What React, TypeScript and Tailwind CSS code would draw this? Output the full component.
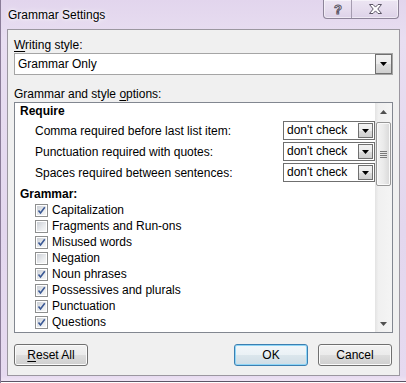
import React from "react";

const rules = [
  "Comma required before last list item:",
  "Punctuation required with quotes:",
  "Spaces required between sentences:",
];

const grammar: [string, boolean][] = [
  ["Capitalization", true],
  ["Fragments and Run-ons", false],
  ["Misused words", true],
  ["Negation", false],
  ["Noun phrases", true],
  ["Possessives and plurals", true],
  ["Punctuation", true],
  ["Questions", true],
  ["Relative clauses", true],
];

function Arrow() {
  return (
    <svg width="7" height="4" viewBox="0 0 7 4">
      <path d="M0 0h7L3.5 4z" fill="#000" />
    </svg>
  );
}

function DropButton({ className = "" }: { className?: string }) {
  return (
    <div
      className={
        "flex items-center justify-center border border-[#707070] bg-[linear-gradient(180deg,#f2f2f2_0%,#ebebeb_50%,#dddddd_51%,#cfcfcf_100%)] " +
        className
      }
    >
      <Arrow />
    </div>
  );
}

function Check({ checked }: { checked: boolean }) {
  return (
    <div className="w-[13px] h-[13px] shrink-0 border border-[#8e8f8f] bg-white p-[1px]">
      <div className="relative w-full h-full bg-[linear-gradient(135deg,#cbcfd5_0%,#e9ebee_60%,#f6f6f6_100%)]">
        {checked && (
          <svg width="9" height="9" viewBox="0 0 9 9" className="absolute left-0 top-0">
            <path d="M1.5 4.5L3.5 7L7.8 1.2" fill="none" stroke="#3a5894" strokeWidth="1.6" />
          </svg>
        )}
      </div>
    </div>
  );
}

function Button({ children, def = false }: { children: React.ReactNode; def?: boolean }) {
  return (
    <button
      className={
        "w-[74px] h-[22px] rounded-[3px] border text-[12px] leading-[14px] text-black " +
        (def
          ? "border-[#3c7fb1] shadow-[inset_0_0_0_1px_#8fd6f7] bg-[linear-gradient(180deg,#f2f7fa_0%,#eaf1f5_50%,#dbe6ec_51%,#cfdde6_100%)]"
          : "border-[#707070] shadow-[inset_0_0_0_1px_#fbfbfb] bg-[linear-gradient(180deg,#f2f2f2_0%,#ebebeb_50%,#dddddd_51%,#cfcfcf_100%)]")
      }
    >
      {children}
    </button>
  );
}

export default function App() {
  return (
    <div className="w-[406px] h-[383px] overflow-hidden flex flex-col bg-[linear-gradient(180deg,#e2d5ed_0%,#e8def1_10%,#e3d7ee_60%,#e6daf0_100%)] border-l border-[#8a7c98] font-['Liberation_Sans',Arial,sans-serif] text-[12px] text-black">
      <div className="h-[29px] shrink-0 flex items-start">
        <div className="pl-[7px] pt-[7px] leading-[16px] text-[12px] [text-shadow:0_0_6px_#fff,0_0_3px_#fff]">
          Grammar Settings
        </div>
        <div className="ml-auto mr-[7px] flex h-[19px] rounded-b-[4px] border border-t-0 border-[#8d8499] bg-[linear-gradient(180deg,#ece5f3_0%,#e6ddee_50%,#ddd2e8_100%)] shadow-[inset_0_0_0_1px_rgba(255,255,255,0.5)]">
          <div className="w-[28px] flex items-center justify-center border-r border-[#a59cb0]">
            <svg width="10" height="13" viewBox="0 0 10 13">
              <text
                x="5"
                y="11"
                textAnchor="middle"
                fontSize="13"
                fontWeight="bold"
                fontFamily="Liberation Sans, Arial, sans-serif"
                fill="#fff"
                stroke="#5b5566"
                strokeWidth="1"
              >
                ?
              </text>
            </svg>
          </div>
          <div className="w-[46px] flex items-center justify-center">
            <svg width="13" height="10" viewBox="0 0 13 10">
              <path
                d="M0.5 0.5h3.5l2.5 2.6 2.5-2.6h3.5L8.8 5l3.7 4.5H9L6.5 6.9 4 9.5H0.5L4.2 5z"
                fill="#fff"
                stroke="#5b5566"
                strokeWidth="1"
                strokeLinejoin="round"
              />
            </svg>
          </div>
        </div>
      </div>

      <div className="mx-[6px] h-[347px] shrink-0 border border-[#9b97a0] bg-[#f0f0f0] px-[6px] pt-[7px] pb-[9px] flex flex-col">
        <div className="leading-[16px] h-[16px]">
          <span className="underline underline-offset-2">W</span>riting style:
        </div>
        <div className="h-[22px] border border-[#a5a5a5] bg-white flex">
          <div className="flex-1 pl-[3px] leading-[20px]">Grammar Only</div>
          <DropButton className="w-[17px] h-[20px]" />
        </div>

        <div className="mt-[11px] leading-[16px] h-[16px]">
          Grammar and style <span className="underline underline-offset-2">o</span>ptions:
        </div>
        <div className="h-[231px] border border-[#828790] bg-white flex">
          <div className="flex-1 overflow-hidden">
            <div className="pl-[5px] h-[16px] leading-[16px] font-bold">Require</div>
            <div className="mt-[1px]">
              {rules.map((r) => (
                <div key={r} className="h-[21px] flex items-center pl-[20px]">
                  <div className="flex-1">{r}</div>
                  <div className="w-[92px] h-[19px] border border-[#6f6f6f] bg-white flex">
                    <div className="flex-1 pl-[3px] leading-[17px]">don't check</div>
                    <DropButton className="w-[15px] m-[1px] ml-0" />
                  </div>
                </div>
              ))}
            </div>
            <div className="mt-[3px] pl-[5px] h-[16px] leading-[16px] font-bold">Grammar:</div>
            {grammar.map(([name, on]) => (
              <div key={name} className="h-[16px] flex items-center pl-[20px] gap-[4px]">
                <Check checked={on} />
                <span className="leading-[16px]">{name}</span>
              </div>
            ))}
          </div>

          <div className="w-[17px] shrink-0 flex flex-col bg-[linear-gradient(90deg,#e3e3e3_0%,#f0f0f0_20%,#f4f4f4_100%)]">
            <div className="h-[17px] flex items-center justify-center">
              <svg width="7" height="4" viewBox="0 0 7 4">
                <path d="M0 4h7L3.5 0z" fill="#505050" />
              </svg>
            </div>
            <div className="mx-[1px] mt-[2px] h-[64px] rounded-[2px] border border-[#979797] bg-[linear-gradient(90deg,#f4f4f4_0%,#eaeaea_50%,#d8d8d8_100%)] shadow-[inset_0_0_0_1px_#fafafa] flex flex-col items-center justify-center gap-[1px]">
              <div className="w-[7px] h-[1px] bg-[#7a7a7a]" />
              <div className="w-[7px] h-[1px] bg-[#7a7a7a]" />
              <div className="w-[7px] h-[1px] bg-[#7a7a7a]" />
              <div className="w-[7px] h-[1px] bg-[#7a7a7a]" />
            </div>
            <div className="flex-1" />
            <div className="h-[17px] flex items-center justify-center">
              <svg width="7" height="4" viewBox="0 0 7 4">
                <path d="M0 0h7L3.5 4z" fill="#505050" />
              </svg>
            </div>
          </div>
        </div>

        <div className="mt-[11px] flex">
          <Button>
            <span className="underline underline-offset-2">R</span>eset All
          </Button>
          <div className="ml-auto flex gap-[10px] mr-[1px]">
            <Button def>OK</Button>
            <Button>Cancel</Button>
          </div>
        </div>
      </div>

      <div className="flex-1 flex flex-col">
        <div className="h-[5px] bg-[linear-gradient(180deg,#e6daf0,#efe4f4)]" />
        <div className="h-[1px] bg-[#5d5566]" />
        <div className="flex-1 bg-white" />
      </div>
    </div>
  );
}
